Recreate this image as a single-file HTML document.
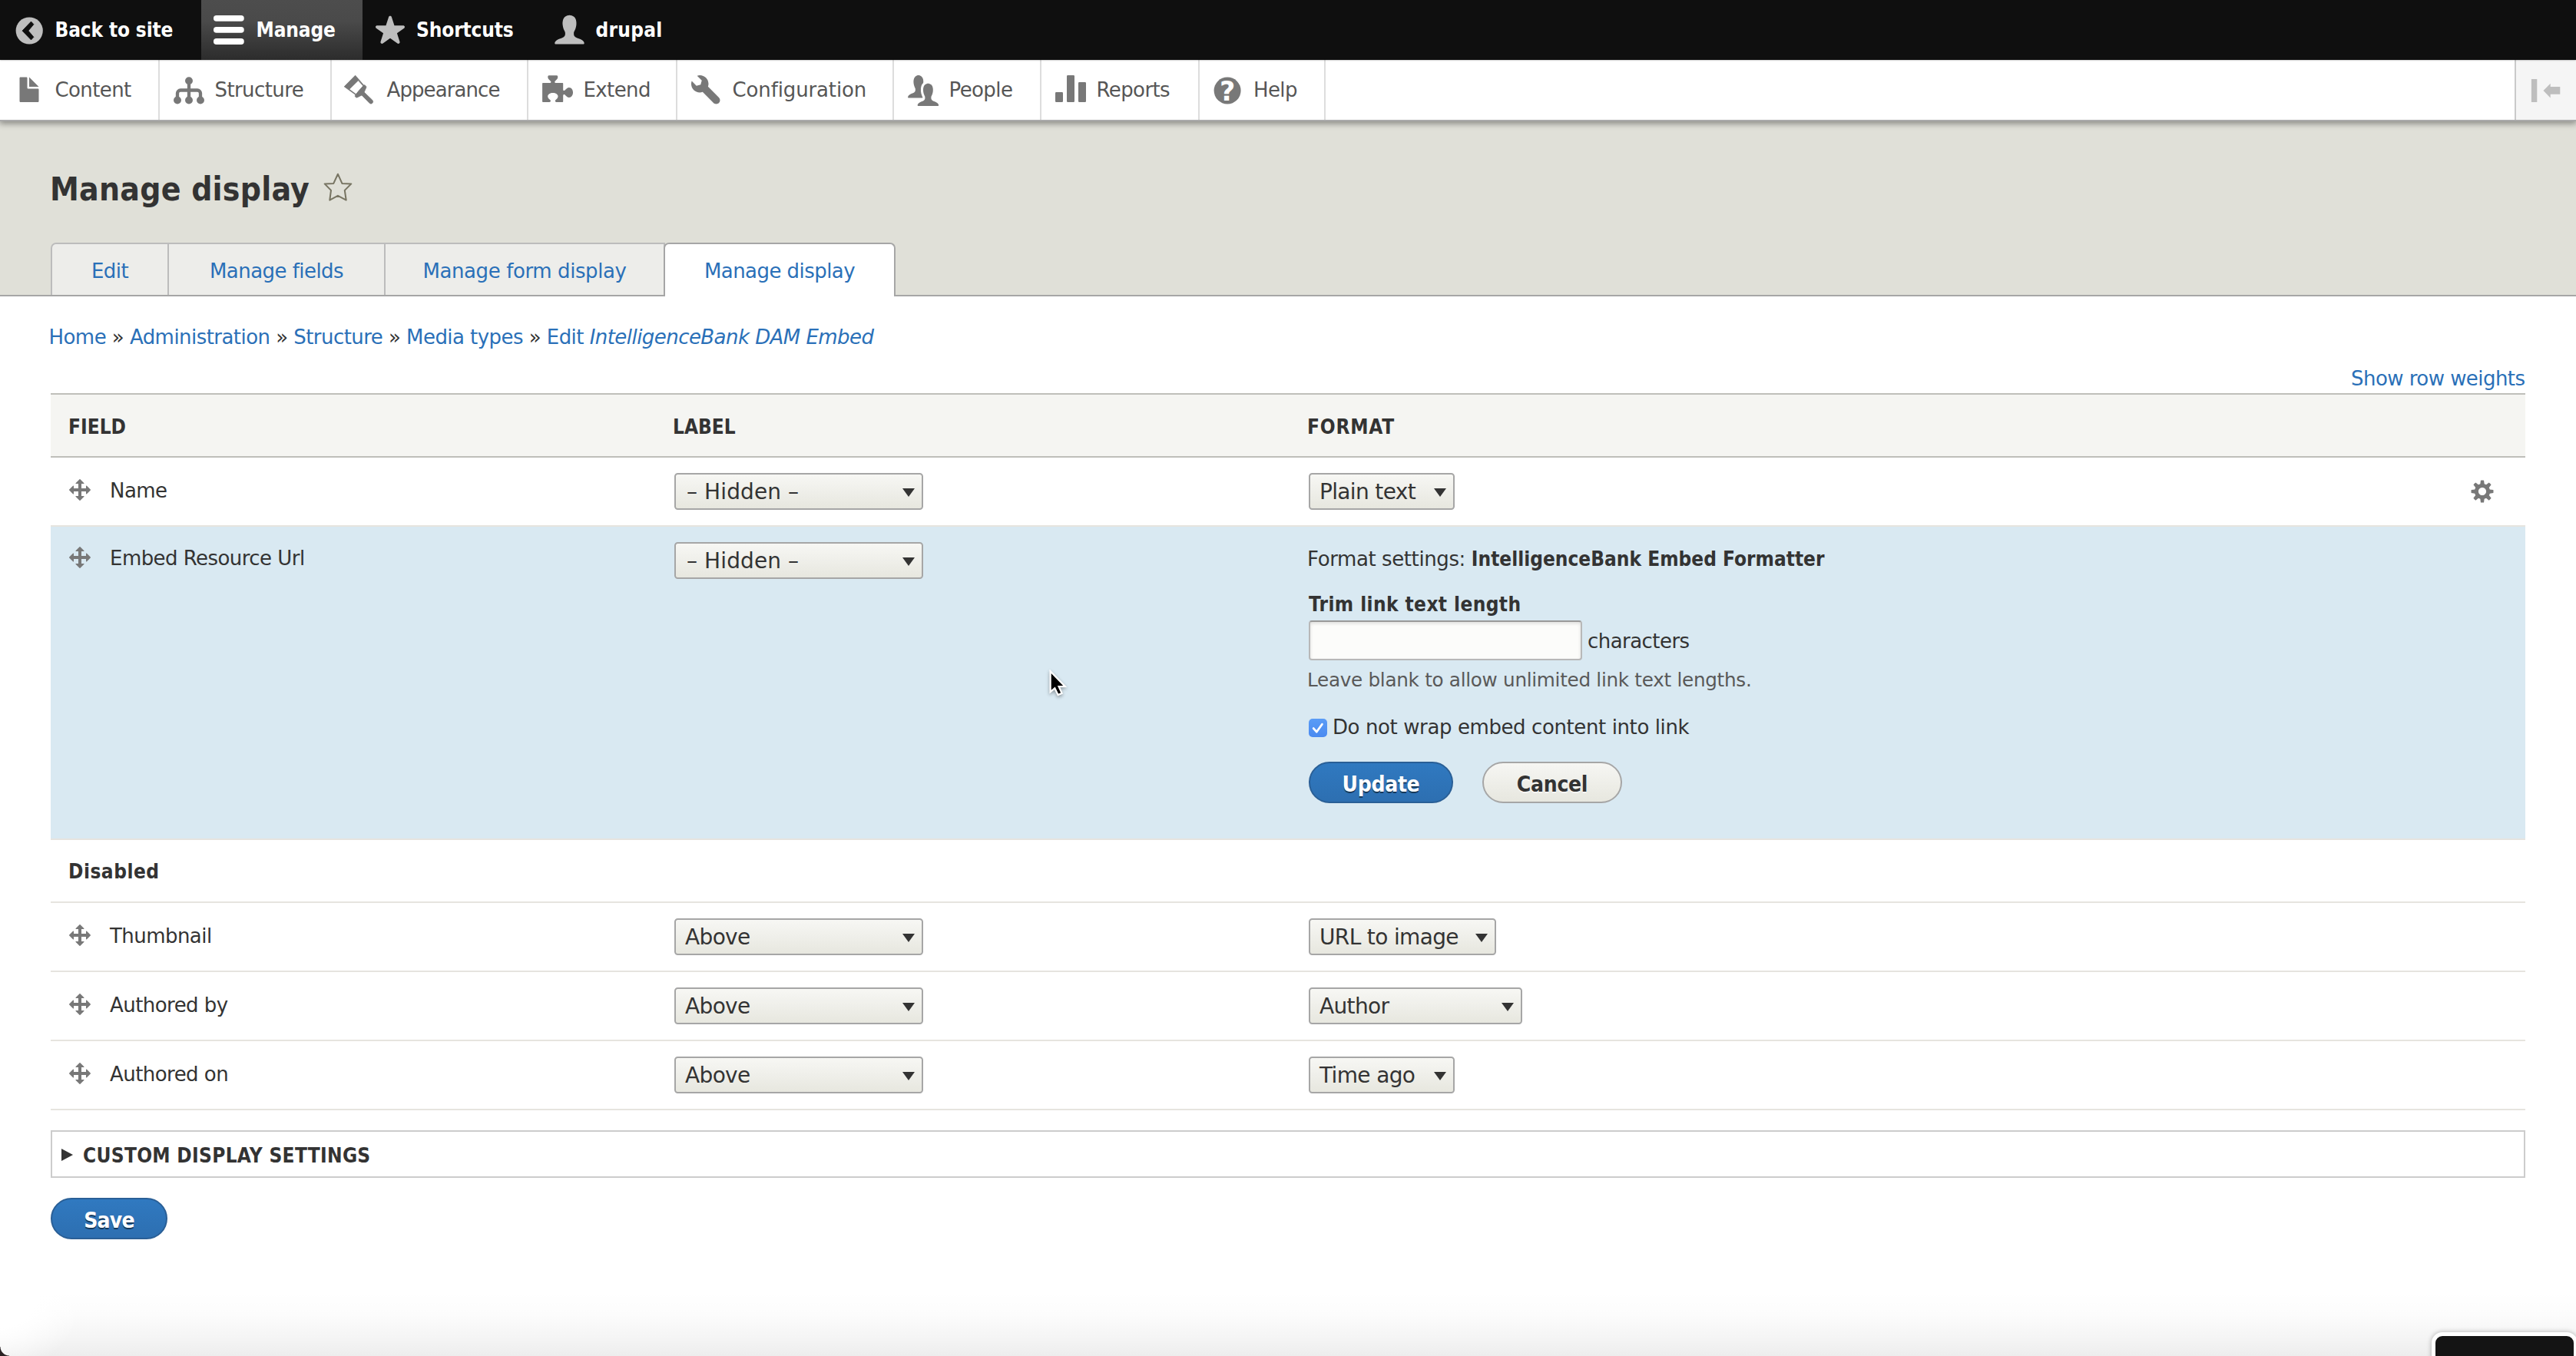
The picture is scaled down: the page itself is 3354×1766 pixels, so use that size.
<!DOCTYPE html>
<html lang="en">
<head>
<meta charset="utf-8">
<title>Manage display | Drupal</title>
<style>
*{box-sizing:border-box;margin:0;padding:0}
html,body{width:3354px;height:1766px;overflow:hidden;background:#fff}
body{position:relative;font-family:"DejaVu Sans","Liberation Sans",sans-serif;font-size:26px;line-height:40px;color:#333;letter-spacing:-0.55px}
a{color:#2a70b8;text-decoration:none}
b,strong,h1,th,.bold{font-family:"DejaVu Sans Condensed","DejaVu Sans","Liberation Sans",sans-serif;font-weight:700;letter-spacing:0}

/* toolbar */
#bar{position:absolute;left:0;top:0;width:3354px;height:78px;background:#0f0f0f;z-index:5;box-shadow:0 0 2px 0 rgba(0,0,0,.5)}
#bar a{position:absolute;top:0;height:78px;line-height:79px;padding-left:71.5px;color:#fff;font-family:"DejaVu Sans Condensed","DejaVu Sans",sans-serif;font-weight:700;font-size:26px;letter-spacing:-0.15px;white-space:nowrap}
#bar a.active{background:linear-gradient(#4d4d4d 0%,#4a4a4a 35%,#2c2c2c 100%)}
#bar svg{position:absolute;left:17px;top:19px;width:40px;height:40px}
#tray{position:absolute;left:0;top:78px;width:3354px;height:80px;background:#fff;border-bottom:2px solid #aaa;z-index:4;box-shadow:0 2px 8px 1px rgba(0,0,0,.4)}
#tray a{position:absolute;top:0;height:78px;line-height:79px;padding-left:71.5px;color:#565656;border-right:2px solid #ddd;white-space:nowrap;letter-spacing:-0.6px}
#tray svg{position:absolute;left:8px;top:10px;width:60px;height:60px}
#orient{position:absolute;right:0;top:0;width:80px;height:78px;background:#f5f5f5;border-left:2px solid #c9c9c9}

/* header */
#hdr{position:absolute;left:0;top:158px;width:3354px;height:228px;background:#e0e0d8;border-bottom:2px solid #a6a6a6}
h1{position:absolute;left:65px;top:217px;font-size:42.3px;line-height:60px;color:#333;white-space:nowrap;letter-spacing:.22px}
#fav{position:absolute;left:420px;top:224px;width:40px;height:40px}
.tab{position:absolute;top:316px;height:68px;border:2px solid #bcbcbc;border-bottom:0;background:#ededea;line-height:70px;text-align:center;color:#2a70b8;white-space:nowrap}
.tab.on{background:#fff;height:70px;border-radius:7px 7px 0 0;border-color:#a6a6a6}

.crumb{position:absolute;left:63.5px;top:419px;white-space:nowrap;color:#333}
#srw{position:absolute;right:66.500px;top:473px;white-space:nowrap}

/* table */
#tbl{position:absolute;left:66px;top:512px;width:3222px}
.th{position:absolute;left:0;top:0;width:3222px;height:84px;background:#f5f5f2;border-top:2px solid #bfbfba;border-bottom:2px solid #bfbfba}
.th span{position:absolute;top:22px;margin-left:-1px;font-size:26px;line-height:40px}
.row{position:absolute;left:0;width:3222px;border-bottom:2px solid #e6e4df}
.row .lbl{position:absolute;left:77px;top:23px;white-space:nowrap}
.row .hnd{position:absolute;left:22px;top:26px;width:32px;height:32px}
.sel{position:absolute;top:20px;height:48px;border:2px solid #a6a6a6;border-radius:4.500px;background:linear-gradient(#f7f7f4,#e7e7df);font-size:28px;line-height:46px;padding-left:12px;color:#333;white-space:nowrap;letter-spacing:-0.65px}
.sel:after{content:"";position:absolute;right:9.500px;top:18.300px;border-left:8.700px solid transparent;border-right:8.700px solid transparent;border-top:11.700px solid #333}
.c2{left:812px;width:324px}
.sel.hid{letter-spacing:.1px;padding-left:14px}
.c3{left:1638px}
.btn{position:absolute;height:54px;border-radius:27px;font-family:"DejaVu Sans Condensed","DejaVu Sans",sans-serif;font-weight:700;font-size:28px;line-height:55px;text-align:center;letter-spacing:-0.3px;white-space:nowrap}
.btn.pri{background:linear-gradient(#3079c0,#2d6fb1);border:2px solid #2a5f96;color:#fff;text-shadow:0 2px 0 rgba(0,0,0,.5)}
.btn.def{background:linear-gradient(#f6f6f3,#e7e7df);border:2px solid #a6a6a6;color:#333;text-shadow:0 2px 0 rgba(255,255,255,.6)}

.row.edit{background:#d9e9f2}
.row.edit .hnd{top:24px}
.row.edit .lbl{top:21px}
.fs{position:absolute;left:1638px;white-space:nowrap}
.desc{font-size:24.7px;color:#595959;letter-spacing:-0.3px}
#inp{position:absolute;left:1638px;top:122px;width:356px;height:52px;border:2px solid #b8b8b8;border-top-color:#999;border-radius:4px;background:#fcfcfa;box-shadow:inset 0 2px 4px rgba(0,0,0,.125)}
#cb{position:absolute;left:1638px;top:250px;width:24px;height:24px;border-radius:5px;background:linear-gradient(#5a9cf6,#4a8af0)}
#cb svg{position:absolute;left:0;top:0;width:24px;height:24px}
#gear{position:absolute;left:3150px;top:28px;width:32px;height:32px}
#det{position:absolute;left:66px;top:1472px;width:3222px;height:62px;border:2px solid #ccc;background:#fff}
#det .bold{position:absolute;left:40px;top:11px;font-size:26px;line-height:40px;white-space:nowrap;letter-spacing:.3px}
#det .tri{position:absolute;left:12px;top:22px;border-top:8.500px solid transparent;border-bottom:8.500px solid transparent;border-left:15px solid #333}
#shade{position:absolute;left:0;top:1682px;width:3354px;height:84px;background:linear-gradient(rgba(0,0,0,0),rgba(0,0,0,.012) 35%,rgba(0,0,0,.04) 70%,rgba(0,0,0,.072))}
#shadeL{position:absolute;left:0;top:1682px;width:260px;height:84px;background:radial-gradient(ellipse 110px 105px at 0 0,rgba(255,255,255,1) 45%,rgba(255,255,255,0) 100%)}
#cornerL{position:absolute;left:0;top:1754px;width:12px;height:12px;background:radial-gradient(circle at 12px 0,rgba(0,0,0,0) 11px,#2a2224 12px)}
#pip{position:absolute;left:3166px;top:1735px;width:190px;height:40px;border:5px solid #fff;border-radius:14px 14px 0 0;background:#141414;box-shadow:0 0 6px rgba(0,0,0,.3)}
#cursor{position:absolute;left:1365px;top:871.500px;width:26px;height:38.100px;filter:drop-shadow(0 2px 2px rgba(0,0,0,.35))}
</style>
</head>
<body>

<div id="bar">
  <a style="left:0;width:262px" href="#">
    <svg viewBox="0 0 60 60" style="left:8px;top:10px;width:60px;height:60px"><circle cx="30.2" cy="30" r="17.6" fill="#bebebe"/><polygon points="32.5,18.100 35.900,21.700 28.900,30.100 35.900,38.300 32.500,41.900 21,30.100" fill="#0f0f0f" stroke="#0f0f0f" stroke-width=".8" stroke-linejoin="round"/></svg>Back to site</a>
  <a class="active" style="left:262px;width:210px" href="#">
    <svg viewBox="0 0 16 16" style="left:16px"><rect x="0" y=".350" width="15.900" height="3.150" rx="1.500" fill="#fff"/><rect x="0" y="6.350" width="15.900" height="3.150" rx="1.500" fill="#fff"/><rect x="0" y="12.400" width="15.900" height="3.150" rx="1.500" fill="#fff"/></svg>Manage</a>
  <a style="left:472px;width:232px;padding-left:70px" href="#">
    <svg viewBox="0 0 16 16" style="left:15.6px;top:16.750px"><path fill="#bebebe" d="M12.236 15.953c-.16 0-.319-.049-.454-.145L8 13.103l-3.786 2.705c-.275.195-.639.193-.912-.005-.273-.196-.386-.549-.283-.868l1.411-4.449-3.706-2.61c-.271-.2-.386-.551-.281-.87.104-.32.402-.537.74-.539l4.602-.007L7.261 2.033C7.367 1.714 7.665 1.5 8 1.5s.633.214.738.532l1.451 4.427 4.625.007c.338.002.638.22.741.539.104.32-.009.671-.281.87l-3.706 2.61 1.411 4.449c.103.319-.01.672-.283.868-.137.101-.298.151-.46.151z"/></svg>Shortcuts</a>
  <a style="left:704px;width:194px;letter-spacing:.25px" href="#">
    <svg viewBox="0 0 16 16" style="left:17.2px;top:19.300px;width:41px;height:41px"><path fill="#bebebe" d="M1 15c-.275 0-.498-.225-.496-.5 0 0 .007-.746 1.071-1.512 1.138-.818 2.347-.969 3.308-1.498s.954-1.299.925-2.115c-.019-.543-.112-.657-.489-1.392-.556-1.084-.709-2.021-.791-2.823-.127-1.252.011-3.035 1.229-4.064C6.389.562 7.288.275 7.972.275h.057c.684 0 1.583.287 2.216.821 1.218 1.028 1.354 2.812 1.229 4.064-.082.802-.235 1.739-.791 2.823-.377.734-.471.849-.49 1.392-.029.816-.035 1.586.926 2.115s2.170.68 3.307 1.498c1.064.766 1.072 1.512 1.072 1.512.002.275-.221.5-.496.5H1z"/></svg>drupal</a>
</div>

<div id="tray">
  <a style="left:0;width:208px" href="#"><svg viewBox="0 0 60 60"><path transform="translate(10 10) scale(2.5)" fill="#787878" d="M12.5 7h-5C7.225 7 7 6.775 7 6.5v-5C7 1.225 6.775 1 6.5 1h-3c-.275 0-.5.225-.5.5v12.029c0 .275.225.5.5.5h9c.275 0 .5-.225.5-.5V7.5c0-.275-.225-.5-.5-.5zM8 6h5L8 1z"/></svg>Content</a>
  <a style="left:208px;width:224px" href="#"><svg viewBox="0 0 60 60"><g fill="#787878"><circle cx="30" cy="17.300" r="4.950"/><circle cx="15" cy="42.500" r="4.950"/><circle cx="30" cy="42.500" r="4.950"/><circle cx="45" cy="42.500" r="4.950"/></g><path d="M30 17v25M15 42.500v-9a4 4 0 0 1 4-4h22a4 4 0 0 1 4 4v9" fill="none" stroke="#787878" stroke-width="4.300"/></svg>Structure</a>
  <a style="left:432px;width:256px;letter-spacing:-0.9px" href="#"><svg viewBox="0 0 60 60"><g fill="#787878" stroke="#787878" stroke-width=".8" stroke-linejoin="round"><path fill-rule="evenodd" d="M22.600 10.200L8.200 24.800 23 35.400 33.600 23zM26.500 16.800L33 24.100 23.500 34.700 14.800 28.300z"/><path d="M33 24.100l.6-1.100c.8-.5 1.500-.2 2.200.5.900.9 1.300 1.600 1 2.400l-2.700 6.200 10.600 10.200c1.200 1.200 1.200 2.800.1 3.900-1.100 1.100-2.700 1.200-3.900-.1L31 35.900l-6 3c-.8.300-1.500 0-2.200-.7-.7-.8-.7-1.500.2-2.800l.5-.700z"/></g></svg>Appearance</a>
  <a style="left:688px;width:194px" href="#"><svg viewBox="0 0 60 60"><path fill="#787878" d="M11.200 20.100H19.600C21 20.100 21.900 19 21.200 18 19.800 16.200 17.300 15.200 17.300 12.600 17.300 11 17.800 10.200 18.600 10.200H29C29.800 10.200 30.300 11 30.300 12.600 30.300 15.200 27.800 16.200 26.500 18 25.800 19 26.600 20.100 28 20.100H36.200C36.800 20.100 37.200 20.500 37.200 21.100V28.500C37.200 30 38.400 30.600 39.600 29.600 41.200 28.200 42.600 26.100 45 26.100 48 26.100 50 29 50 32.500 50 36 48 38.900 45 38.900 42.600 38.900 41.200 36.800 39.600 35.400 38.400 34.400 37.200 35 37.200 36.500V43.900C37.200 44.500 36.800 44.900 36.200 44.900H28.300C26.800 44.900 26.300 43.400 27.400 42.300 28.800 40.900 30.500 39.900 30.500 37.600 30.500 34.800 27.600 33 23.900 33 20.200 33 17.200 34.800 17.200 37.600 17.200 39.900 19 40.900 20.400 42.300 21.500 43.400 21 44.900 19.500 44.900H11.200C10.600 44.900 10.100 44.500 10.100 43.900V21.100C10.100 20.500 10.600 20.100 11.200 20.100Z"/></svg>Extend</a>
  <a style="left:882px;width:282px;letter-spacing:-0.13px" href="#"><svg viewBox="0 0 60 60"><path transform="translate(10 10) scale(2.5)" fill="#787878" d="M14.416 11.586l-.01-.008v-.001L8.750 5.921c.15-.449.252-.921.252-1.421 0-2.485-2.016-4.500-4.502-4.500-.505 0-.981.102-1.434.255l2.431 2.431-.588 2.196-2.196.588L.268 3.025C.106 3.489 0 3.981 0 4.500 0 6.986 2.014 9 4.500 9c.5 0 .972-.102 1.421-.251l5.667 5.665c.781.781 2.047.781 2.828 0s.781-2.047 0-2.828z"/></svg>Configuration</a>
  <a style="left:1164px;width:192px" href="#"><svg viewBox="0 0 60 60"><g fill="#787878"><path transform="translate(9.200 9.550) scale(1.830 1.990)" d="M1 15c-.275 0-.498-.225-.496-.5 0 0 .007-.746 1.071-1.512 1.138-.818 2.347-.969 3.308-1.498s.954-1.299.925-2.115c-.019-.543-.112-.657-.489-1.392-.556-1.084-.709-2.021-.791-2.823-.127-1.252.011-3.035 1.229-4.064C6.389.562 7.288.275 7.972.275h.057c.684 0 1.583.287 2.216.821 1.218 1.028 1.354 2.812 1.229 4.064-.082.802-.235 1.739-.791 2.823-.377.734-.471.849-.49 1.392-.029.816-.035 1.586.926 2.115s2.170.68 3.307 1.498c1.064.766 1.072 1.512 1.072 1.512.002.275-.221.500-.496.500H1z"/><path stroke="#fff" stroke-width="3.400" paint-order="stroke" transform="translate(21.760 20.150) scale(1.830 1.990)" d="M1 15c-.275 0-.498-.225-.496-.5 0 0 .007-.746 1.071-1.512 1.138-.818 2.347-.969 3.308-1.498s.954-1.299.925-2.115c-.019-.543-.112-.657-.489-1.392-.556-1.084-.709-2.021-.791-2.823-.127-1.252.011-3.035 1.229-4.064C6.389.562 7.288.275 7.972.275h.057c.684 0 1.583.287 2.216.821 1.218 1.028 1.354 2.812 1.229 4.064-.082.802-.235 1.739-.791 2.823-.377.734-.471.849-.49 1.392-.029.816-.035 1.586.926 2.115s2.170.68 3.307 1.498c1.064.766 1.072 1.512 1.072 1.512.002.275-.221.500-.496.500H1z"/></g></svg>People</a>
  <a style="left:1356px;width:206px" href="#"><svg viewBox="0 0 60 60"><g fill="#787878"><rect x="10" y="32" width="10" height="13" rx="1.200"/><rect x="25" y="10" width="10" height="35" rx="1.200"/><rect x="40" y="19" width="10" height="26" rx="1.200"/></g></svg>Reports</a>
  <a style="left:1562px;width:164px;padding-left:70px" href="#"><svg viewBox="0 0 60 60"><circle cx="28.100" cy="30" r="17.500" fill="#787878"/><text x="28.200" y="43.100" text-anchor="middle" font-family="DejaVu Sans,sans-serif" font-weight="700" font-size="35" fill="#fff" letter-spacing="0">?</text></svg>Help</a>
  <div id="orient"><svg viewBox="0 0 78 78" style="left:0;top:0;width:78px;height:78px"><rect x="19.900" y="25" width="7.400" height="30" fill="#bebebe"/><path d="M35.500 40l9.200-9.300v4.200h12.600v9.800H44.700v4.800z" fill="#bebebe"/></svg></div>
</div>

<div id="hdr"></div>
<h1>Manage display</h1>
<svg id="fav" viewBox="0 0 40 40"><path d="M19.900 2.700L25.400 14.900 37.300 15.400 28.800 23.900 30.700 36.600 19.900 30.900 9.300 36.600 11 23.900 2.700 15.400 14.300 14.900z" fill="none" stroke="#787563" stroke-width="2.050" stroke-linejoin="round"/></svg>

<a class="tab" style="left:66px;width:154px;border-radius:7px 0 0 0" href="#">Edit</a>
<a class="tab" style="left:218px;width:284px" href="#">Manage fields</a>
<a class="tab" style="left:500px;width:366px;letter-spacing:-0.4px" href="#">Manage form display</a>
<a class="tab on" style="left:864px;width:302px" href="#">Manage display</a>

<div class="crumb"><a href="#">Home</a> » <a href="#">Administration</a> » <a href="#">Structure</a> » <a href="#">Media types</a> » <a href="#">Edit <em>IntelligenceBank DAM Embed</em></a></div>
<a id="srw" href="#">Show row weights</a>

<div id="tbl">
  <div class="th"><span class="bold" style="left:24px">FIELD</span><span class="bold" style="left:811px">LABEL</span><span class="bold" style="left:1637px;letter-spacing:.8px">FORMAT</span></div>
  <div class="row" style="top:84px;height:90px"><svg class="hnd" viewBox="0 0 16 16"><path fill="#787878" d="M14.904 7.753l-2.373-2.372c-.291-.292-.529-.193-.529.22V7h-3V4h1.398c.414 0 .512-.239.221-.53L8.250 1.098c-.137-.136-.36-.136-.497 0L5.381 3.470c-.292.292-.193.53.22.53H7v3H4V5.631c0-.413-.239-.511-.53-.22L1.098 7.783c-.136.136-.136.359 0 .494l2.372 2.372c.291.292.53.192.53-.219V9h3v3H5.600c-.413 0-.511.238-.22.529l2.374 2.373c.137.137.36.137.495 0l2.373-2.373c.29-.291.19-.529-.222-.529H9V9h3v1.400c0 .412.238.511.529.219l2.373-2.371c.137-.137.137-.359.002-.495z"/></svg><span class="lbl">Name</span>
    <div class="sel c2 hid">– Hidden –</div><div class="sel c3" style="width:190px">Plain text</div>
    <svg id="gear" viewBox="0 0 16 16"><path fill="#787878" d="M15.176 9.041c.045-.327.076-.658.076-.998 0-.36-.035-.71-.086-1.056l-2.275-.293c-.115-.426-.283-.827-.498-1.201l1.396-1.808c-.416-.551-.906-1.039-1.459-1.452l-1.807 1.391c-.373-.215-.774-.383-1.200-.499L9.031.873C8.693.825 8.354.792 8.002.792S7.308.825 6.970.874l-.291 2.251c-.426.116-.826.284-1.200.499L3.674 2.233c-.552.413-1.044.901-1.459 1.452L3.610 5.493c-.215.374-.383.774-.499 1.200L.835 6.987C.785 7.333.750 7.683.750 8.043c0 .34.031.671.077.998l2.285.295c.115.426.284.826.499 1.200l-1.417 1.836c.411.55.896 1.038 1.443 1.452l1.842-1.420c.374.215.774.383 1.200.498l.298 2.311c.337.047.677.080 1.025.080s.688-.033 1.021-.080l.299-2.311c.426-.115.826-.283 1.201-.498l1.842 1.420c.547-.414 1.031-.902 1.443-1.452l-1.416-1.837c.215-.373.383-.774.498-1.199l2.286-.295zm-7.174 1.514c-1.406 0-2.543-1.137-2.543-2.541 0-1.402 1.137-2.541 2.543-2.541 1.402 0 2.541 1.138 2.541 2.541 0 1.404-1.139 2.541-2.541 2.541z"/></svg>
  </div>
  <div class="row edit" style="top:174px;height:408px"><svg class="hnd" viewBox="0 0 16 16"><path fill="#787878" d="M14.904 7.753l-2.373-2.372c-.291-.292-.529-.193-.529.22V7h-3V4h1.398c.414 0 .512-.239.221-.53L8.250 1.098c-.137-.136-.36-.136-.497 0L5.381 3.470c-.292.292-.193.53.22.53H7v3H4V5.631c0-.413-.239-.511-.53-.22L1.098 7.783c-.136.136-.136.359 0 .494l2.372 2.372c.291.292.53.192.53-.219V9h3v3H5.600c-.413 0-.511.238-.22.529l2.374 2.373c.137.137.36.137.495 0l2.373-2.373c.29-.291.19-.529-.222-.529H9V9h3v1.400c0 .412.238.511.529.219l2.373-2.371c.137-.137.137-.359.002-.495z"/></svg><span class="lbl">Embed Resource Url</span>
    <div class="sel c2 hid" style="top:20px">– Hidden –</div>
    <div class="fs" style="top:22px;left:1636px;letter-spacing:-0.4px">Format settings: <b style="letter-spacing:0">IntelligenceBank Embed Formatter</b></div>
    <div class="fs bold" style="top:81px;letter-spacing:.4px">Trim link text length</div>
    <div id="inp"></div><span class="fs" style="left:2001px;top:129px">characters</span>
    <div class="fs desc" style="top:180px;left:1636px">Leave blank to allow unlimited link text lengths.</div>
    <div id="cb"><svg viewBox="0 0 24 24"><path d="M6.200 12.600l4 4.600 7.200-10" fill="none" stroke="#fff" stroke-width="2.800" stroke-linecap="round" stroke-linejoin="round"/></svg></div><span class="fs" style="left:1669px;top:241px;letter-spacing:-0.4px">Do not wrap embed content into link</span>
    <div class="btn pri" style="left:1638px;top:306px;width:188px">Update</div>
    <div class="btn def" style="left:1864px;top:306px;width:182px">Cancel</div>
  </div>
  <div class="row" style="top:582px;height:82px"><span class="lbl bold" style="left:23px;top:21px;letter-spacing:.5px">Disabled</span></div>
  <div class="row" style="top:664px;height:90px"><svg class="hnd" viewBox="0 0 16 16"><path fill="#787878" d="M14.904 7.753l-2.373-2.372c-.291-.292-.529-.193-.529.22V7h-3V4h1.398c.414 0 .512-.239.221-.53L8.250 1.098c-.137-.136-.36-.136-.497 0L5.381 3.470c-.292.292-.193.53.22.53H7v3H4V5.631c0-.413-.239-.511-.53-.22L1.098 7.783c-.136.136-.136.359 0 .494l2.372 2.372c.291.292.53.192.53-.219V9h3v3H5.600c-.413 0-.511.238-.22.529l2.374 2.373c.137.137.36.137.495 0l2.373-2.373c.29-.291.19-.529-.222-.529H9V9h3v1.400c0 .412.238.511.529.219l2.373-2.371c.137-.137.137-.359.002-.495z"/></svg><span class="lbl">Thumbnail</span>
    <div class="sel c2">Above</div><div class="sel c3" style="width:244px">URL to image</div></div>
  <div class="row" style="top:754px;height:90px"><svg class="hnd" viewBox="0 0 16 16"><path fill="#787878" d="M14.904 7.753l-2.373-2.372c-.291-.292-.529-.193-.529.22V7h-3V4h1.398c.414 0 .512-.239.221-.53L8.250 1.098c-.137-.136-.36-.136-.497 0L5.381 3.470c-.292.292-.193.53.22.53H7v3H4V5.631c0-.413-.239-.511-.53-.22L1.098 7.783c-.136.136-.136.359 0 .494l2.372 2.372c.291.292.53.192.53-.219V9h3v3H5.600c-.413 0-.511.238-.22.529l2.374 2.373c.137.137.36.137.495 0l2.373-2.373c.29-.291.19-.529-.222-.529H9V9h3v1.400c0 .412.238.511.529.219l2.373-2.371c.137-.137.137-.359.002-.495z"/></svg><span class="lbl">Authored by</span>
    <div class="sel c2">Above</div><div class="sel c3" style="width:278px">Author</div></div>
  <div class="row" style="top:844px;height:90px"><svg class="hnd" viewBox="0 0 16 16"><path fill="#787878" d="M14.904 7.753l-2.373-2.372c-.291-.292-.529-.193-.529.22V7h-3V4h1.398c.414 0 .512-.239.221-.53L8.250 1.098c-.137-.136-.36-.136-.497 0L5.381 3.470c-.292.292-.193.53.22.53H7v3H4V5.631c0-.413-.239-.511-.53-.22L1.098 7.783c-.136.136-.136.359 0 .494l2.372 2.372c.291.292.53.192.53-.219V9h3v3H5.600c-.413 0-.511.238-.22.529l2.374 2.373c.137.137.36.137.495 0l2.373-2.373c.29-.291.19-.529-.222-.529H9V9h3v1.400c0 .412.238.511.529.219l2.373-2.371c.137-.137.137-.359.002-.495z"/></svg><span class="lbl">Authored on</span>
    <div class="sel c2">Above</div><div class="sel c3" style="width:190px">Time ago</div></div>
</div>

<div id="det"><span class="tri"></span><span class="bold">CUSTOM DISPLAY SETTINGS</span></div>
<div class="btn pri" style="left:66px;top:1560px;width:152px;letter-spacing:-0.8px">Save</div>
<div id="shade"></div><div id="shadeL"></div><div id="cornerL"></div><div id="pip"></div>
<svg id="cursor" viewBox="0 0 30 44"><path d="M3 2.500v31l6.600-5.400 4.900 10.100 5.800-2.600-4.600-10 9.300-.2z" fill="#000" stroke="#fff" stroke-width="2.600" stroke-linejoin="miter"/></svg>

</body>
</html>
